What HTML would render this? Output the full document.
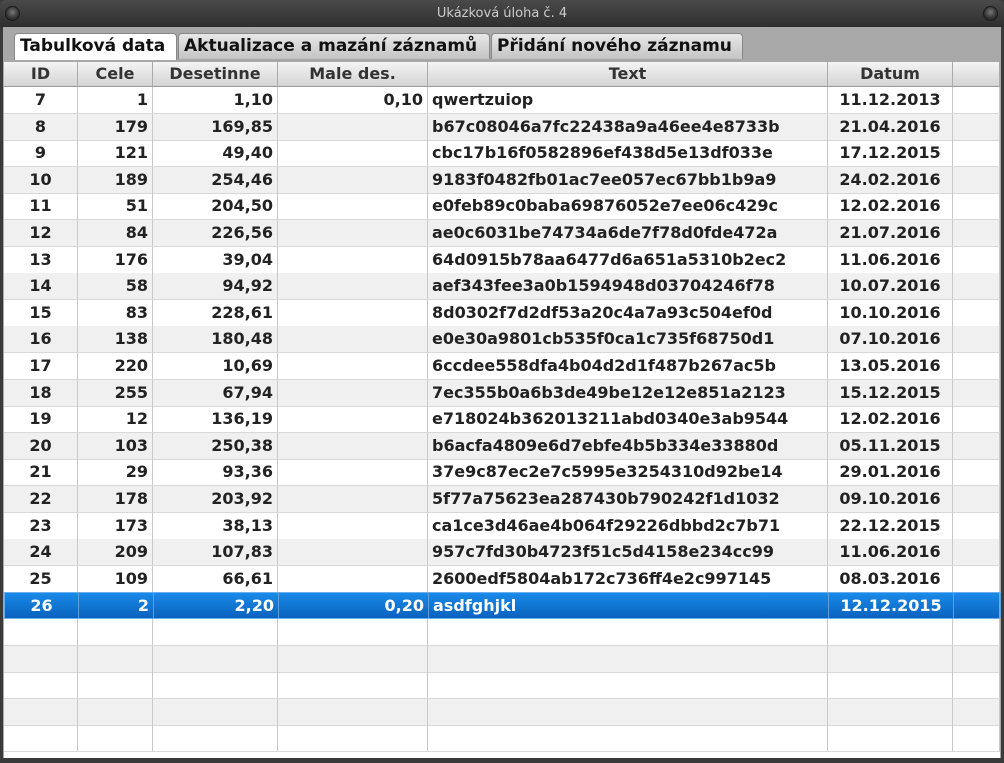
<!DOCTYPE html>
<html><head><meta charset="utf-8"><style>
*{margin:0;padding:0;box-sizing:border-box}
body{width:1004px;height:763px;background:#3a3a3a;font-family:"DejaVu Sans","Liberation Sans",sans-serif;font-weight:bold;font-size:16px;color:#222;position:relative;overflow:hidden}
#title{position:absolute;left:0;top:0;width:1004px;height:27px;background:linear-gradient(#4a4a4a,#2e2e2e);border-radius:6px 6px 0 0;color:#ccc;font-weight:normal;font-size:13px;text-align:center;line-height:27px}
.knob{position:absolute;top:6px;width:15px;height:15px;border-radius:50%;background:radial-gradient(circle at 50% 40%,#777,#333 60%,#222);border:1px solid #1a1a1a}
#frame{position:absolute;left:3px;top:27px;width:998px;height:731px;background:#a8a8a8}
.tab{position:absolute;top:6px;height:26px;border:1px solid #888;border-bottom:none;border-radius:4px 4px 0 0;background:linear-gradient(#e8e8e8,#c4c4c4);line-height:25px;padding-left:5px;font-size:17px;color:#111;white-space:nowrap;overflow:hidden}
#grid{position:absolute;left:1px;top:35px;width:996px;height:696px;background:#fff}
.c{position:absolute;height:100%;border-right:1px solid #c8c8c8;padding:0 4px;white-space:nowrap;overflow:hidden}
.r{position:absolute;left:0;width:996px;height:27px;line-height:26px;border-bottom:1px solid #d8d8d8}
.r.o{background:#f0f0f0}
.h{position:absolute;left:0;top:0;width:996px;height:25px;line-height:24px;background:linear-gradient(#f4f4f4,#d4d4d4);border-bottom:1px solid #999;color:#333}
.h .c{text-align:center;border-right:1px solid #aaa}
.r.sel{background:linear-gradient(#1a8ae8,#0a62be);color:#fff;border:1px solid #6ab0f0}
.r.sel .c{border-right-color:#5aa0dd}
.rt{text-align:right}.ct{text-align:center}
</style></head><body>
<div id="title">Ukázková úloha č. 4</div>
<div class="knob" style="left:5px"></div><div class="knob" style="left:983px"></div>
<div id="frame">
<div class="tab" style="left:11px;width:163px;background:#fff;height:27px">Tabulková data</div>
<div class="tab" style="left:175px;width:312px">Aktualizace a mazání záznamů</div>
<div class="tab" style="left:488px;width:252px">Přidání nového záznamu</div>
<div id="grid">
<div class="h"><div class="c" style="left:0;width:74px">ID</div><div class="c" style="left:74px;width:75px">Cele</div><div class="c" style="left:149px;width:125px">Desetinne</div><div class="c" style="left:274px;width:150px">Male des.</div><div class="c" style="left:424px;width:400px">Text</div><div class="c" style="left:824px;width:125px">Datum</div><div class="c" style="left:949px;width:47px"></div></div>
<div id="rows"></div>
</div>
</div>
<script>
var d=[[7,1,"1,10","0,10","qwertzuiop","11.12.2013"],[8,179,"169,85","","b67c08046a7fc22438a9a46ee4e8733b","21.04.2016"],[9,121,"49,40","","cbc17b16f0582896ef438d5e13df033e","17.12.2015"],[10,189,"254,46","","9183f0482fb01ac7ee057ec67bb1b9a9","24.02.2016"],[11,51,"204,50","","e0feb89c0baba69876052e7ee06c429c","12.02.2016"],[12,84,"226,56","","ae0c6031be74734a6de7f78d0fde472a","21.07.2016"],[13,176,"39,04","","64d0915b78aa6477d6a651a5310b2ec2","11.06.2016"],[14,58,"94,92","","aef343fee3a0b1594948d03704246f78","10.07.2016"],[15,83,"228,61","","8d0302f7d2df53a20c4a7a93c504ef0d","10.10.2016"],[16,138,"180,48","","e0e30a9801cb535f0ca1c735f68750d1","07.10.2016"],[17,220,"10,69","","6ccdee558dfa4b04d2d1f487b267ac5b","13.05.2016"],[18,255,"67,94","","7ec355b0a6b3de49be12e12e851a2123","15.12.2015"],[19,12,"136,19","","e718024b362013211abd0340e3ab9544","12.02.2016"],[20,103,"250,38","","b6acfa4809e6d7ebfe4b5b334e33880d","05.11.2015"],[21,29,"93,36","","37e9c87ec2e7c5995e3254310d92be14","29.01.2016"],[22,178,"203,92","","5f77a75623ea287430b790242f1d1032","09.10.2016"],[23,173,"38,13","","ca1ce3d46ae4b064f29226dbbd2c7b71","22.12.2015"],[24,209,"107,83","","957c7fd30b4723f51c5d4158e234cc99","11.06.2016"],[25,109,"66,61","","2600edf5804ab172c736ff4e2c997145","08.03.2016"],[26,2,"2,20","0,20","asdfghjkl","12.12.2015"]];
var h="";
for(var i=0;i<25;i++){var t=25+i*26.6;var r=d[i]||["","","","","",""];
h+='<div class="r'+(i%2?' o':'')+(i==19?' sel':'')+'" style="top:'+t+'px"><div class="c ct" style="left:0;width:74px">'+r[0]+'</div><div class="c rt" style="left:74px;width:75px">'+r[1]+'</div><div class="c rt" style="left:149px;width:125px">'+r[2]+'</div><div class="c rt" style="left:274px;width:150px">'+r[3]+'</div><div class="c" style="left:424px;width:400px">'+r[4]+'</div><div class="c ct" style="left:824px;width:125px">'+r[5]+'</div><div class="c" style="left:949px;width:47px"></div></div>';}
document.getElementById("rows").innerHTML=h;
</script>
</body></html>
